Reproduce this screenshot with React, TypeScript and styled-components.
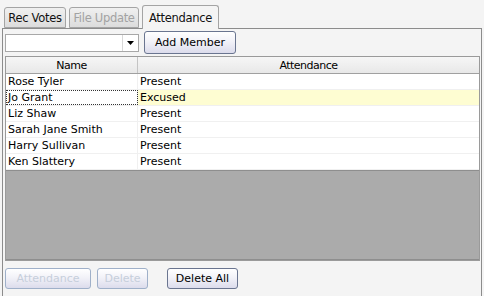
import React from "react";
import styled, { createGlobalStyle } from "styled-components";

const Global = createGlobalStyle`
  html, body { margin: 0; padding: 0; background: #f4f4f4; }
  body { font-family: "DejaVu Sans", Tahoma, sans-serif; font-size: 11px; color: #000; }
`;

const Window = styled.div`
  width: 484px;
  height: 296px;
  overflow: hidden;
  background: #f4f4f4;
  display: flex;
  flex-direction: column;
`;

const TabStrip = styled.div`
  display: flex;
  align-items: flex-end;
  height: 28px;
  padding-left: 4px;
  gap: 3px;
`;

const Tab = styled.div<{ $w: number; $active?: boolean; $disabled?: boolean }>`
  box-sizing: border-box;
  width: ${(p) => p.$w}px;
  height: ${(p) => (p.$active ? 24 : 21)}px;
  margin-bottom: ${(p) => (p.$active ? -1 : 0)}px;
  display: flex;
  align-items: center;
  justify-content: center;
  padding-top: ${(p) => (p.$active ? 0 : 1)}px;
  border: 1px solid #a4a4a4;
  border-bottom: ${(p) => (p.$active ? "none" : "1px solid #a4a4a4")};
  border-radius: 3px 3px 0 0;
  background: ${(p) =>
    p.$active ? "#f4f4f4" : "linear-gradient(#f0f0f0, #dcdcdc)"};
  color: ${(p) => (p.$disabled ? "#a2a2a2" : "#111")};
  font-size: 11.5px;
  letter-spacing: -0.3px;
  position: relative;
  z-index: ${(p) => (p.$active ? 1 : 0)};
`;

const Panel = styled.div`
  box-sizing: border-box;
  margin-left: 2px;
  width: 480px;
  flex: 1;
  border: 1px solid #8c8c8c;
  border-bottom: none;
  display: flex;
  flex-direction: column;
  padding: 2px 1px 0 2px;
`;

const Toolbar = styled.div`
  display: flex;
  align-items: center;
  gap: 5px;
  height: 23px;
`;

const Combo = styled.div`
  box-sizing: border-box;
  width: 134px;
  height: 18px;
  background: #fff;
  border: 1px solid #a8a8a8;
  display: flex;
  justify-content: flex-end;
  align-items: center;
`;

const ComboArrow = styled.div`
  width: 15px;
  height: 100%;
  border-left: 1px solid #d8d8d8;
  display: flex;
  align-items: center;
  justify-content: center;
`;

const Button = styled.button<{ $w: number; $disabled?: boolean }>`
  box-sizing: border-box;
  width: ${(p) => p.$w}px;
  height: ${(p) => (p.$disabled !== undefined ? 21 : 23)}px;
  border-radius: 3px;
  border: 1px solid ${(p) => (p.$disabled ? "#9fb0c9" : "#6a7590")};
  background: linear-gradient(#ffffff 0%, #f2f2f8 45%, #dcdcec 100%);
  color: ${(p) => (p.$disabled ? "#c6cedb" : "#000")};
  font-family: "DejaVu Sans", Tahoma, sans-serif;
  font-size: 11px;
  padding: 0;
  cursor: default;
`;

const Grid = styled.div`
  box-sizing: border-box;
  margin-top: 2px;
  width: 475px;
  height: 205px;
  border: 1px solid #9a9a9a;
  display: flex;
  flex-direction: column;
  background: #fff;
`;

const Row = styled.div<{ $header?: boolean; $selected?: boolean }>`
  box-sizing: border-box;
  display: grid;
  grid-template-columns: 132px 1fr;
  height: ${(p) => (p.$header ? 17 : 16)}px;
  flex: none;
  background: ${(p) =>
    p.$header ? "linear-gradient(#f6f6f6, #e8e8e8)" : p.$selected ? "#fefdd2" : "#fff"};
  border-bottom: 1px solid ${(p) => (p.$header ? "#a0a0a0" : "#f0f0f0")};
`;

const Cell = styled.div<{ $header?: boolean; $focus?: boolean; $first?: boolean }>`
  box-sizing: border-box;
  display: flex;
  align-items: center;
  justify-content: ${(p) => (p.$header ? "center" : "flex-start")};
  padding-left: ${(p) => (p.$header ? 0 : 2)}px;
  border-right: ${(p) => (p.$first ? "1px solid " + (p.$header ? "#c4c4c4" : "#f0f0f0") : "none")};
  outline: ${(p) => (p.$focus ? "1px dotted #333" : "none")};
  outline-offset: -1px;
  background: ${(p) => (p.$focus ? "#fff" : "transparent")};
  letter-spacing: ${(p) => (p.$header ? "-0.5px" : "0")};
  white-space: nowrap;
  overflow: hidden;
`;

const Empty = styled.div`
  flex: 1;
  background: #ababab;
  border-top: 1px solid #8e8e8e;
  border-bottom: 1px solid #8e8e8e;
`;

const Footer = styled.div`
  display: flex;
  align-items: center;
  margin-top: 7px;
`;

const FooterGap = styled.div<{ $w: number }>`
  width: ${(p) => p.$w}px;
  flex: none;
`;

const rows = [
  ["Rose Tyler", "Present"],
  ["Jo Grant", "Excused"],
  ["Liz Shaw", "Present"],
  ["Sarah Jane Smith", "Present"],
  ["Harry Sullivan", "Present"],
  ["Ken Slattery", "Present"],
];

export default function App() {
  return (
    <Window>
      <Global />
      <TabStrip>
        <Tab $w={62}>Rec Votes</Tab>
        <Tab $w={70} $disabled>File Update</Tab>
        <Tab $w={77} $active>Attendance</Tab>
      </TabStrip>
      <Panel>
        <Toolbar>
          <Combo>
            <ComboArrow>
              <svg width="7" height="4" viewBox="0 0 7 4">
                <path d="M0 0h7L3.5 4z" fill="#000" />
              </svg>
            </ComboArrow>
          </Combo>
          <Button $w={92}>Add Member</Button>
        </Toolbar>
        <Grid>
          <Row $header>
            <Cell $header $first>Name</Cell>
            <Cell $header>Attendance</Cell>
          </Row>
          {rows.map(([n, a], i) => (
            <Row key={n} $selected={i === 1}>
              <Cell $first $focus={i === 1}>{n}</Cell>
              <Cell>{a}</Cell>
            </Row>
          ))}
          <Empty />
        </Grid>
        <Footer>
          <Button $w={86} $disabled>Attendance</Button>
          <FooterGap $w={6} />
          <Button $w={51} $disabled>Delete</Button>
          <FooterGap $w={19} />
          <Button $w={71} $disabled={false}>Delete All</Button>
        </Footer>
      </Panel>
    </Window>
  );
}
